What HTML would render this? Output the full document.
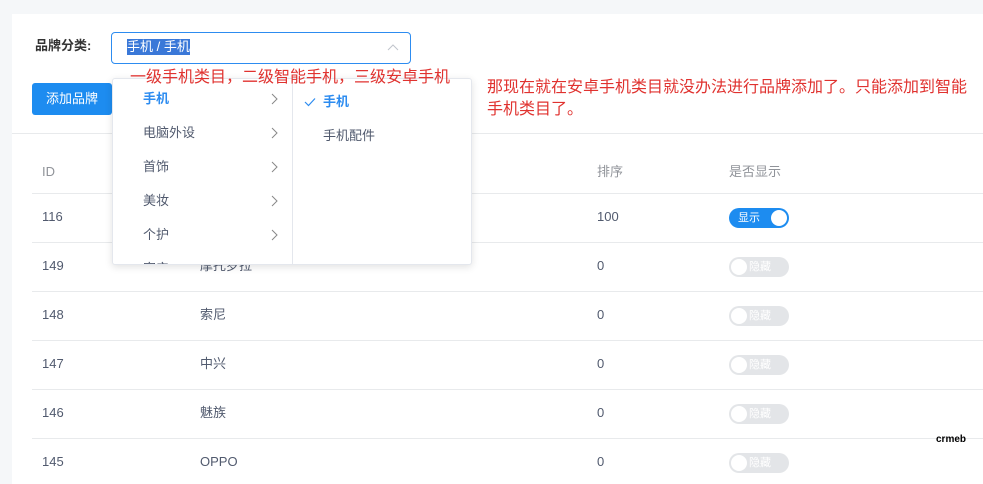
<!DOCTYPE html>
<html><head><meta charset="utf-8"><style>
*{margin:0;padding:0;box-sizing:border-box}
body{width:983px;height:474px;overflow:hidden;background:#f5f7f9;font-family:"Liberation Sans","Noto Sans CJK SC",sans-serif;font-size:13px;color:#515a6e;position:relative}
.card{position:absolute;left:12px;top:14px;width:990px;height:470px;background:#fff}
.a{position:absolute;white-space:nowrap;line-height:16px}
.line{position:absolute;left:32px;width:960px;height:1px;background:#e8eaec}
.sw{position:absolute;left:729px;width:60px;height:20px;border-radius:10px;background:#e3e5e8}
.sw i{position:absolute;left:2px;top:2px;width:16px;height:16px;border-radius:50%;background:#fff}
.sw span{position:absolute;left:20px;top:2px;font-size:11px;line-height:16px;color:#fff}
.red{color:#e0322f;font-size:16px;line-height:22px}
.ch{position:absolute;left:157px}
</style></head><body>
<div class="card"></div>
<div class="a" style="left:35px;top:38px;font-weight:bold;color:#333">品牌分类:</div>
<div class="a" style="left:111px;top:32px;width:300px;height:32px;border:1px solid #2d8cf0;border-radius:4px"></div>
<div class="a" style="left:127px;top:39px;background:#3a78d8;color:#fff">手机 / 手机</div>
<svg class="a" style="left:387px;top:44px" width="12" height="8"><path d="M1 6L6 1L11 6" fill="none" stroke="#c0c4cc" stroke-width="1"/></svg>
<div class="a" style="left:32px;top:83px;width:80px;height:32px;background:#1d8cf0;border-radius:3px;color:#fff;line-height:32px;text-align:center">添加品牌</div>
<div class="a" style="left:12px;top:133px;width:980px;height:1px;background:#e8eaec"></div>
<div class="a" style="left:42px;top:164px;color:#909399">ID</div>
<div class="a" style="left:597px;top:164px;color:#909399">排序</div>
<div class="a" style="left:729px;top:164px;color:#909399">是否显示</div>
<div class="line" style="top:193px"></div>
<div class="line" style="top:242px"></div>
<div class="line" style="top:291px"></div>
<div class="line" style="top:340px"></div>
<div class="line" style="top:389px"></div>
<div class="line" style="top:438px"></div>
<div class="a" style="left:42px;top:209px">116</div><div class="a" style="left:597px;top:209px">100</div>
<div class="sw" style="top:208px;background:#1d8cf0"><span style="left:9px">显示</span><i style="left:42px"></i></div>
<div class="a" style="left:42px;top:258px">149</div><div class="a" style="left:200px;top:258px">摩托罗拉</div><div class="a" style="left:597px;top:258px">0</div><div class="sw" style="top:257px"><i></i><span>隐藏</span></div>
<div class="a" style="left:42px;top:307px">148</div><div class="a" style="left:200px;top:307px">索尼</div><div class="a" style="left:597px;top:307px">0</div><div class="sw" style="top:306px"><i></i><span>隐藏</span></div>
<div class="a" style="left:42px;top:356px">147</div><div class="a" style="left:200px;top:356px">中兴</div><div class="a" style="left:597px;top:356px">0</div><div class="sw" style="top:355px"><i></i><span>隐藏</span></div>
<div class="a" style="left:42px;top:405px">146</div><div class="a" style="left:200px;top:405px">魅族</div><div class="a" style="left:597px;top:405px">0</div><div class="sw" style="top:404px"><i></i><span>隐藏</span></div>
<div class="a" style="left:42px;top:454px">145</div><div class="a" style="left:200px;top:454px">OPPO</div><div class="a" style="left:597px;top:454px">0</div><div class="sw" style="top:453px"><i></i><span>隐藏</span></div>
<div class="a" style="left:936px;top:432px;font-size:10px;font-weight:bold;color:#000">crmeb</div>
<div class="a" style="left:112px;top:78px;width:360px;height:187px;background:#fff;border:1px solid #e4e7ed;border-radius:3px;box-shadow:0 2px 8px rgba(0,0,0,.12);overflow:hidden">
 <div class="a" style="left:179px;top:0;width:1px;height:187px;background:#e4e7ed"></div>
 <div class="a" style="left:30px;top:12px;color:#2d8cf0;font-weight:bold">手机</div>
 <div class="a" style="left:30px;top:46px">电脑外设</div>
 <div class="a" style="left:30px;top:80px">首饰</div>
 <div class="a" style="left:30px;top:114px">美妆</div>
 <div class="a" style="left:30px;top:148px">个护</div>
 <div class="a" style="left:30px;top:182px">家产</div>
 <svg class="ch" style="top:14px" width="8" height="12"><path d="M2 1L7 6L2 11" fill="none" stroke="#888" stroke-width="1"/></svg>
 <svg class="ch" style="top:48px" width="8" height="12"><path d="M2 1L7 6L2 11" fill="none" stroke="#888" stroke-width="1"/></svg>
 <svg class="ch" style="top:82px" width="8" height="12"><path d="M2 1L7 6L2 11" fill="none" stroke="#888" stroke-width="1"/></svg>
 <svg class="ch" style="top:116px" width="8" height="12"><path d="M2 1L7 6L2 11" fill="none" stroke="#888" stroke-width="1"/></svg>
 <svg class="ch" style="top:150px" width="8" height="12"><path d="M2 1L7 6L2 11" fill="none" stroke="#888" stroke-width="1"/></svg>
 <svg class="a" style="left:191px;top:18px" width="12" height="10"><path d="M1 5L4.5 8.5L11 1.5" fill="none" stroke="#2d8cf0" stroke-width="1.2"/></svg>
 <div class="a" style="left:210px;top:15px;color:#2d8cf0;font-weight:bold">手机</div>
 <div class="a" style="left:210px;top:49px">手机配件</div>
</div>
<div class="a red" style="left:130px;top:67px">一级手机类目，二级智能手机，三级安卓手机</div>
<div class="a red" style="left:487px;top:77px">那现在就在安卓手机类目就没办法进行品牌添加了。只能添加到智能<br>手机类目了。</div>
</body></html>
